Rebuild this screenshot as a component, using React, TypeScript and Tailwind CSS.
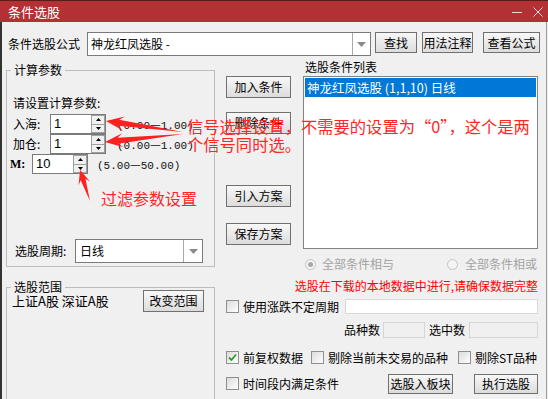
// 条件选股 dialog with red annotations

type Pt = [number, number];

// tapered annotation arrow: wide head at the tip, thin tail
const arrowPoints = (tip: Pt, tail: Pt, hl: number, hw: number, sw: number) => {
  const [tx, ty] = tip;
  const [sx, sy] = tail;
  const len = Math.hypot(sx - tx, sy - ty);
  const ux = (sx - tx) / len;
  const uy = (sy - ty) / len;
  const nx = -uy;
  const ny = ux;
  const bx = tx + ux * hl;
  const by = ty + uy * hl;
  const jx = tx + ux * hl * 0.72;
  const jy = ty + uy * hl * 0.72;
  const pts: Pt[] = [
    [tx, ty],
    [bx + nx * hw, by + ny * hw],
    [jx + nx * sw, jy + ny * sw],
    [sx, sy],
    [jx - nx * sw, jy - ny * sw],
    [bx - nx * hw, by - ny * hw],
  ];
  return pts.map((p) => p.join(",")).join(" ");
};

const Btn = ({ children, className }: { children: React.ReactNode; className: string }) => (
  <div
    className={`flex shrink-0 items-center justify-center border border-[#707070] bg-linear-to-b from-[#f8f8f8] to-[#dcdcdc] text-[12px] leading-none text-black ${className}`}
  >
    {children}
  </div>
);

const DropArrow = () => (
  <svg width="9" height="5" viewBox="0 0 9 5">
    <path d="M0 0 H9 L4.5 5 Z" fill="#8a8a8a" />
  </svg>
);

const Check = ({ checked }: { checked?: boolean }) => (
  <div className="flex h-[13px] w-[13px] shrink-0 items-center justify-center border border-[#8e8f8f] bg-linear-to-br from-[#dcdcdc] to-[#ffffff]">
    {checked && (
      <svg width="9" height="9" viewBox="0 0 9 9">
        <path d="M1 4.5 L3.5 7 L8 1.5" stroke="#21a121" strokeWidth="1.8" fill="none" />
      </svg>
    )}
  </div>
);

const Radio = ({ on }: { on?: boolean }) => (
  <div className="flex h-[11px] w-[11px] shrink-0 items-center justify-center rounded-full border border-[#c4c4c4] bg-[#f4f4f4]">
    {on && <div className="h-[5px] w-[5px] rounded-full bg-[#a8a8a8]" />}
  </div>
);

const SpinInput = ({ value }: { value: string }) => (
  <div className="flex h-[20px] w-[56px] shrink-0 border border-[#7a7a7a] bg-white">
    <div className="flex-1 pl-[3px] font-['Liberation_Sans',sans-serif] text-[13px] leading-[18px]">{value}</div>
    <div className="flex w-[14px] flex-col bg-[#f0f0f0]">
      <div className="flex flex-1 items-center justify-center border border-[#a0a0a0]">
        <svg width="5" height="3" viewBox="0 0 5 3">
          <path d="M0 3 L2.5 0 L5 3 Z" fill="#000" />
        </svg>
      </div>
      <div className="flex flex-1 items-center justify-center border border-t-0 border-[#a0a0a0]">
        <svg width="5" height="3" viewBox="0 0 5 3">
          <path d="M0 0 H5 L2.5 3 Z" fill="#000" />
        </svg>
      </div>
    </div>
  </div>
);

const Range = ({ lo, hi }: { lo: string; hi: string }) => (
  <span className="font-['Liberation_Mono',monospace] text-[11px] leading-none text-[#111]">
    ({lo}
    <span className="font-['Noto_Sans_CJK_SC',sans-serif] text-[12px]">—</span>
    {hi})
  </span>
);

export default function App() {
  return (
    <div className="relative flex h-[399px] w-[548px] flex-col overflow-hidden whitespace-nowrap bg-[#f0f0f0] font-['Noto_Sans_CJK_SC',sans-serif] text-[12px] text-black">
      {/* title bar */}
      <div className="flex h-[22px] shrink-0 items-center border-t border-t-[#5c1a1c] bg-[#b33135] pl-[8px] pr-[5px] text-[13px] leading-none text-white">
        <span>条件选股</span>
        <div className="ml-auto flex items-center gap-[11px]">
          <svg width="10" height="10" viewBox="0 0 10 10">
            <path d="M0 5.5 H10" stroke="#f0d6d6" strokeWidth="1" />
          </svg>
          <svg width="10" height="10" viewBox="0 0 10 10">
            <path d="M0.5 0.5 L9.5 9.5 M9.5 0.5 L0.5 9.5" stroke="#f0d6d6" strokeWidth="1" />
          </svg>
        </div>
      </div>

      <div className="flex w-[547px] flex-1 flex-col border-l-2 border-r border-l-[#333333] border-r-[#9c9c9c]">
        {/* formula row */}
        <div className="mt-[10px] flex items-start pl-[6px]">
          <span className="w-[79px] pt-[4px] leading-[16px]">条件选股公式</span>
          <div className="flex h-[24px] w-[284px] border border-[#7a7a7a] bg-white">
            <span className="flex-1 pl-[3px] leading-[22px]">神龙红凤选股 -</span>
            <div className="flex w-[18px] items-center justify-center border-l border-[#a8a8a8]">
              <DropArrow />
            </div>
          </div>
          <Btn className="ml-[4px] h-[21px] w-[42px]">查找</Btn>
          <Btn className="ml-[5px] h-[21px] w-[51px]">用法注释</Btn>
          <Btn className="ml-[10px] h-[21px] w-[57px]">查看公式</Btn>
        </div>

        <div className="mt-[6px] flex">
          {/* left column */}
          <div className="ml-[4px] flex w-[209px] flex-col">
            <fieldset className="h-[205px] border border-[#bdbdbd]">
              <legend className="ml-[4px] px-[3px] leading-[16px]">计算参数</legend>
              <div className="mt-[18px] pl-[6px] leading-[14px]">请设置计算参数:</div>
              <div className="mt-[4px] flex h-[20px] items-center pl-[6px]">
                <span className="w-[37px]">入海:</span>
                <SpinInput value="1" />
                <span className="ml-[11px]">
                  <Range lo="0.00" hi="1.00" />
                </span>
              </div>
              <div className="flex h-[20px] items-center pl-[6px]">
                <span className="w-[37px]">加仓:</span>
                <SpinInput value="1" />
                <span className="ml-[11px]">
                  <Range lo="0.00" hi="1.00" />
                </span>
              </div>
              <div className="flex h-[20px] items-center pl-[3px]">
                <span className="w-[22px] font-['Liberation_Serif',serif] text-[12px] font-bold">M:</span>
                <SpinInput value="10" />
                <span className="ml-[9px]">
                  <Range lo="5.00" hi="50.00" />
                </span>
              </div>
              <div className="mt-[65px] flex items-center pl-[8px]">
                <span className="w-[60px]">选股周期:</span>
                <div className="flex h-[24px] w-[128px] border border-[#7a7a7a] bg-white">
                  <span className="flex-1 pl-[4px] leading-[22px]">日线</span>
                  <div className="flex w-[19px] items-center justify-center border-l border-[#a8a8a8]">
                    <DropArrow />
                  </div>
                </div>
              </div>
            </fieldset>

            <fieldset className="mt-[12px] h-[140px] border border-[#bdbdbd]">
              <legend className="ml-[4px] px-[3px] leading-[16px]">选股范围</legend>
              <div className="-mt-[5px] flex h-[22px] items-center pl-[5px] pr-[10px]">
                <span className="text-[13px]">上证A股 深证A股</span>
                <Btn className="ml-auto h-[22px] w-[61px]">改变范围</Btn>
              </div>
            </fieldset>
          </div>

          {/* right area */}
          <div className="ml-[11px] flex w-[312px] flex-col">
            <div className="flex">
              <div className="flex w-[65px] flex-col pt-[14px]">
                <Btn className="h-[22px] w-[65px]">加入条件</Btn>
                <Btn className="mt-[14px] h-[22px] w-[65px]">删除条件</Btn>
                <Btn className="mt-[51px] h-[22px] w-[65px]">引入方案</Btn>
                <Btn className="mt-[16px] h-[22px] w-[65px]">保存方案</Btn>
              </div>
              <div className="ml-[12px] flex w-[235px] flex-col">
                <div className="h-[14px] pl-[2px] leading-[10px]">选股条件列表</div>
                <div className="h-[173px] border border-[#828282] bg-white p-[1px]">
                  <div className="h-[19px] bg-[#0078d7] pl-[2px] text-[12.5px] leading-[19px] text-white">
                    神龙红凤选股 (1,1,10) 日线
                  </div>
                </div>
                <div className="mt-[8px] flex h-[14px] items-center justify-between pl-[2px] pr-[1px] text-[#a3a3a3]">
                  <div className="flex items-center gap-[6px]">
                    <Radio on />
                    <span>全部条件相与</span>
                  </div>
                  <div className="flex items-center gap-[7px]">
                    <Radio />
                    <span>全部条件相或</span>
                  </div>
                </div>
              </div>
            </div>

            <div className="mt-[8px] text-right leading-[14px] text-[#ff0000]">
              选股在下载的本地数据中进行,请确保数据完整
            </div>

            <div className="mt-[6px] flex h-[15px] items-center">
              <Check />
              <span className="ml-[4px]">使用涨跌不定周期</span>
              <div className="ml-[6px] h-[15px] flex-1 border border-[#d9d9d9] bg-white" />
            </div>

            <div className="mt-[8px] flex h-[16px] items-center justify-end">
              <span>品种数</span>
              <div className="ml-[3px] h-[16px] w-[42px] border border-[#d6d6d6] bg-[#f0f0f0]" />
              <span className="ml-[4px]">选中数</span>
              <div className="ml-[4px] h-[16px] w-[69px] border border-[#d6d6d6] bg-[#f0f0f0]" />
            </div>

            <div className="mt-[12px] flex h-[15px] items-center">
              <Check checked />
              <span className="ml-[4px] shrink-0">前复权数据</span>
              <div className="ml-[8px]">
                <Check />
              </div>
              <span className="ml-[4px] shrink-0">剔除当前未交易的品种</span>
              <div className="ml-[10px]">
                <Check />
              </div>
              <span className="ml-[4px] shrink-0">剔除ST品种</span>
            </div>

            <div className="mt-[8px] flex h-[21px] items-center">
              <Check />
              <span className="ml-[4px]">时间段内满足条件</span>
              <Btn className="ml-auto h-[20px] w-[65px]">选股入板块</Btn>
              <Btn className="ml-[21px] h-[20px] w-[64px]">执行选股</Btn>
            </div>
          </div>
        </div>
      </div>

      {/* red annotations drawn over the dialog */}
      <svg className="pointer-events-none absolute left-0 top-0" width="548" height="399">
        <polygon points={arrowPoints([106, 121], [183, 132], 18, 7, 3)} fill="#ff2020" />
        <polygon points={arrowPoints([105, 142], [183, 134], 18, 7, 3)} fill="#ff2020" />
        <polygon points={arrowPoints([80, 170], [90, 201], 14, 6, 2.5)} fill="#ff2020" />
      </svg>
      <div className="pointer-events-none absolute left-[187px] top-[117px] text-[16.3px] leading-[18px] text-[#ff2626]">
        信号选择设置，不需要的设置为“0”，这个是两
        <br />
        个信号同时选。
      </div>
      <div className="pointer-events-none absolute left-[101px] top-[189px] text-[16px] leading-[18px] text-[#ff2626]">
        过滤参数设置
      </div>
    </div>
  );
}
